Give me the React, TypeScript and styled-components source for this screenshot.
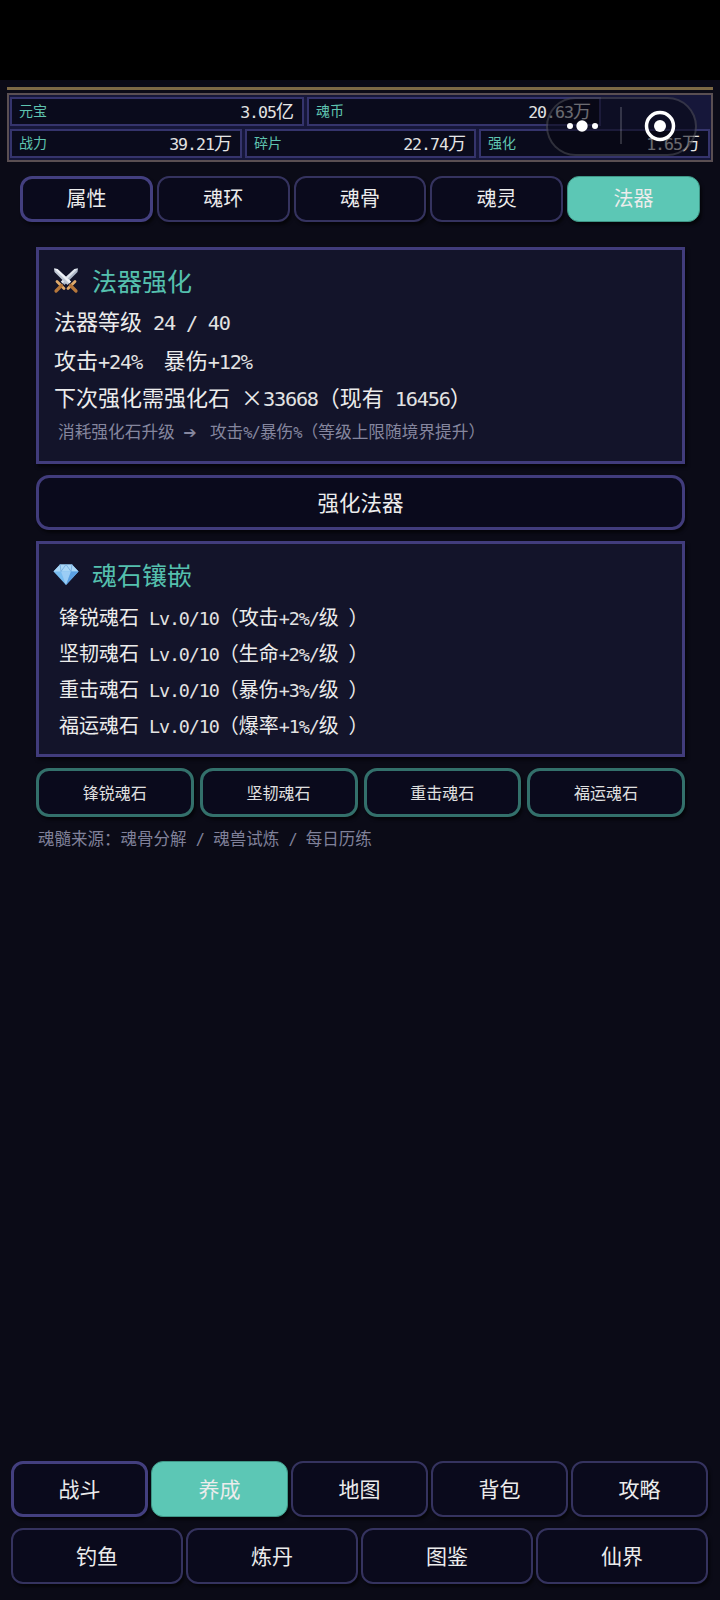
import styled, { createGlobalStyle } from "styled-components";

const GlobalStyle = createGlobalStyle`
  html, body {
    margin: 0;
    padding: 0;
    background: #000;
  }
  * {
    box-sizing: border-box;
  }
`;

const Page = styled.div`
  position: relative;
  width: 720px;
  height: 1600px;
  display: flex;
  flex-direction: column;
  background: #0b0b17;
  color: #ececec;
  font-family: "Noto Sans CJK SC", "Noto Sans", sans-serif;
  overflow: hidden;
`;

// half-width latin, the reference's font has digits at exactly 0.5em
const Num = styled.span`
  font-family: "DejaVu Sans Mono", monospace;
  font-size: 0.92em;
  letter-spacing: -0.06em;
  color: #e2e2e2;
`;

const StatusBar = styled.div`
  height: 80px;
  flex: none;
  background: #000;
`;

const HeaderWrap = styled.div`
  flex: none;
  padding: 7px 7px 0;
`;

const GoldLine = styled.div`
  height: 3px;
  background: #7d6a45;
  margin-bottom: 3px;
`;

const StatsBox = styled.div`
  height: 69px;
  border: 2px solid #5a4f52;
  background: #16173a;
  padding: 2px 1px;
  display: flex;
  flex-direction: column;
  gap: 3px;
`;

const StatRow = styled.div`
  display: flex;
  gap: 3px;
`;

const StatCell = styled.div<{ $w: number }>`
  width: ${(p) => p.$w}px;
  height: 29px;
  flex: none;
  display: flex;
  align-items: center;
  justify-content: space-between;
  padding: 0 8px 4px 7px;
  background: #0a0b1c;
  border: 2px solid #35346c;
`;

const StatLabel = styled.span`
  font-size: 14px;
  color: #5fc4b0;
`;

const StatValue = styled.span`
  font-size: 18px;
  color: #e6e6e6;
`;

const Capsule = styled.div`
  position: absolute;
  left: 546px;
  top: 97px;
  width: 151px;
  height: 59px;
  border-radius: 30px;
  border: 2px solid rgba(255, 255, 255, 0.16);
  background: rgba(8, 8, 18, 0.55);
`;

const CapsuleIcon = styled.svg`
  position: absolute;
  left: 0;
  top: 0;
`;

const TabRow = styled.div`
  flex: none;
  margin-top: 14px;
  padding: 0 20px;
  display: grid;
  grid-template-columns: repeat(5, 1fr);
  gap: 4px;
`;

const NavButton = styled.div<{ $active?: boolean; $strong?: boolean; $h: number; $fs: number }>`
  height: ${(p) => p.$h}px;
  display: flex;
  align-items: center;
  justify-content: center;
  padding-bottom: 3px;
  border-radius: 12px;
  font-size: ${(p) => p.$fs}px;
  color: #ececec;
  background: ${(p) => (p.$active ? "#5cc7b5" : "#0a0a1c")};
  border: ${(p) =>
    p.$active
      ? "1px solid #3f9686"
      : p.$strong
        ? "3px solid #433f7f"
        : "2px solid #35335f"};
  box-shadow: 2px 3px 3px rgba(0, 0, 0, 0.55);
`;

const Content = styled.div`
  flex: none;
  margin-top: 25px;
  padding: 0 35px 0 36px;
  display: flex;
  flex-direction: column;
`;

const Panel = styled.div<{ $h: number }>`
  height: ${(p) => p.$h}px;
  padding: 10px 15px 0;
  background: #13142a;
  border: 3px solid #413c7c;
  box-shadow: 2px 3px 3px rgba(0, 0, 0, 0.55);
`;

const PanelTitle = styled.div`
  height: 40px;
  display: flex;
  align-items: center;
  gap: 12px;
  font-size: 25px;
  color: #55c0ae;

  svg {
    margin-left: -2px;
  }
`;

const InfoLine = styled.div<{ $top: number }>`
  margin-top: ${(p) => p.$top}px;
  height: 30px;
  line-height: 30px;
  font-size: 22px;
  white-space: pre;
  color: #ececec;
`;

const Hint = styled.div`
  margin-top: 7px;
  padding-left: 4px;
  font-size: 16.7px;
  line-height: 26px;
  color: #85869e;
  white-space: pre;

  ${Num} {
    color: inherit;
  }
`;

const HintArrow = styled.span`
  font-family: "DejaVu Sans", sans-serif;
  font-size: 16px;
  margin-right: 5px;
`;

const GemLine = styled.div`
  height: 36px;
  line-height: 36px;
  padding-left: 5px;
  font-size: 20px;
  white-space: pre;
  color: #ececec;
`;

const GemList = styled.div`
  margin-top: 5px;
`;

const WideButton = styled.div`
  margin: 11px 0;
  height: 55px;
  display: flex;
  align-items: center;
  justify-content: center;
  padding-bottom: 3px;
  border-radius: 13px;
  border: 3px solid #413c7c;
  background: #0a0a1c;
  font-size: 21.5px;
  color: #ececec;
  box-shadow: 2px 3px 3px rgba(0, 0, 0, 0.55);
`;

const GemButtons = styled.div`
  margin-top: 11px;
  display: grid;
  grid-template-columns: repeat(4, 1fr);
  gap: 6px;
`;

const GemButton = styled.div`
  height: 49px;
  display: flex;
  align-items: center;
  justify-content: center;
  padding-bottom: 2px;
  border-radius: 13px;
  border: 3px solid #33706b;
  background: #0a0a1c;
  font-size: 16px;
  color: #e0e0e0;
  box-shadow: 2px 3px 3px rgba(0, 0, 0, 0.55);
`;

const Note = styled.div`
  margin-top: 9px;
  padding-left: 2px;
  font-size: 16.5px;
  line-height: 24px;
  word-spacing: 1px;
  color: #80819a;
  white-space: pre;

  ${Num} {
    color: inherit;
  }
`;

const Spacer = styled.div`
  flex: 1;
`;

const BottomNav = styled.div`
  flex: none;
  padding: 0 12px 16px 11px;
  display: flex;
  flex-direction: column;
  gap: 11px;
`;

const NavRow = styled.div<{ $cols: number }>`
  display: grid;
  grid-template-columns: repeat(${(p) => p.$cols}, 1fr);
  gap: 3px;
`;

const SwordsIcon = () => (
  <svg width="28" height="28" viewBox="0 0 28 28">
    <path d="M26 2.500l-.5 3.500-13 13-3.500-3.500L22.500 3z" fill="#aeb8c8" />
    <path d="M26 2.500L10.500 17.500l-1.500-2L22.500 3z" fill="#dfe4ec" />
    <path d="M2 2.500l.5 3.500 13 13 3.500-3.500L5.500 3z" fill="#c0c9d6" />
    <path d="M2 2.500l15.500 15 1.500-2L5.500 3z" fill="#eef1f6" />
    <path d="M5 15.500l7 7M23 15.500l-7 7" stroke="#e0ab6c" strokeWidth="2.800" strokeLinecap="round" />
    <path d="M9.500 19.500L4 25M18.500 19.500L24 25" stroke="#b5763a" strokeWidth="3.200" strokeLinecap="round" />
  </svg>
);

const GemIcon = () => (
  <svg width="28" height="28" viewBox="0 0 28 28">
    <path d="M8 4.500h12l6.500 7L14 25 1.500 11.500z" fill="#78bcf0" />
    <path d="M8 4.500h12l6.500 7h-25z" fill="#a9d6f6" />
    <path d="M9 11.500h10L14 25z" fill="#9bcdf5" />
    <path d="M8 4.500l1 7 5-7 5 7 1-7" fill="none" stroke="#6ea8dc" strokeWidth="0.800" />
    <path d="M19 11.500h7.500L14 25z" fill="#5a9fe2" />
  </svg>
);

const tabs = ["属性", "魂环", "魂骨", "魂灵", "法器"];
const gems = [
  { name: "锋锐魂石", effect: "攻击", bonus: "+2%/" },
  { name: "坚韧魂石", effect: "生命", bonus: "+2%/" },
  { name: "重击魂石", effect: "暴伤", bonus: "+3%/" },
  { name: "福运魂石", effect: "爆率", bonus: "+1%/" },
];
const navTop = ["战斗", "养成", "地图", "背包", "攻略"];
const navBottom = ["钓鱼", "炼丹", "图鉴", "仙界"];

export default function App() {
  return (
    <Page>
      <GlobalStyle />
      <StatusBar />
      <HeaderWrap>
        <GoldLine />
        <StatsBox>
          <StatRow>
            <StatCell $w={294}>
              <StatLabel>元宝</StatLabel>
              <StatValue><Num>3.05</Num>亿</StatValue>
            </StatCell>
            <StatCell $w={294}>
              <StatLabel>魂币</StatLabel>
              <StatValue><Num>20.63</Num>万</StatValue>
            </StatCell>
          </StatRow>
          <StatRow>
            <StatCell $w={232}>
              <StatLabel>战力</StatLabel>
              <StatValue><Num>39.21</Num>万</StatValue>
            </StatCell>
            <StatCell $w={231}>
              <StatLabel>碎片</StatLabel>
              <StatValue><Num>22.74</Num>万</StatValue>
            </StatCell>
            <StatCell $w={231}>
              <StatLabel>强化</StatLabel>
              <StatValue><Num>1.65</Num>万</StatValue>
            </StatCell>
          </StatRow>
        </StatsBox>
      </HeaderWrap>
      <Capsule>
        <CapsuleIcon width="147" height="55" viewBox="0 0 147 55">
          <circle cx="22" cy="27" r="3" fill="#fff" />
          <circle cx="34" cy="27" r="5.700" fill="#fff" />
          <circle cx="47" cy="27" r="3" fill="#fff" />
          <path d="M73 8v37" stroke="rgba(255,255,255,0.22)" strokeWidth="1.500" />
          <circle cx="112" cy="27" r="13.500" fill="none" stroke="#fff" strokeWidth="3.500" />
          <circle cx="112" cy="27" r="6" fill="#fff" />
        </CapsuleIcon>
      </Capsule>
      <TabRow>
        {tabs.map((t, i) => (
          <NavButton key={t} $h={46} $fs={20} $active={i === 4} $strong={i === 0}>
            {t}
          </NavButton>
        ))}
      </TabRow>
      <Content>
        <Panel $h={217}>
          <PanelTitle>
            <SwordsIcon />
            法器强化
          </PanelTitle>
          <InfoLine $top={5}>法器等级<Num> 24 / 40</Num></InfoLine>
          <InfoLine $top={9}>攻击<Num>+24%  </Num>暴伤<Num>+12%</Num></InfoLine>
          <InfoLine $top={7}>下次强化需强化石<Num> </Num>×<Num>33668</Num>（现有<Num> 16456</Num>）</InfoLine>
          <Hint>消耗强化石升级<Num> </Num><HintArrow>➔</HintArrow><Num> </Num>攻击<Num>%/</Num>暴伤<Num>%</Num>（等级上限随境界提升）</Hint>
        </Panel>
        <WideButton>强化法器</WideButton>
        <Panel $h={216}>
          <PanelTitle>
            <GemIcon />
            魂石镶嵌
          </PanelTitle>
          <GemList>
            {gems.map((g) => (
              <GemLine key={g.name}>
                {g.name}<Num> Lv.0/10</Num>（{g.effect}<Num>{g.bonus}</Num>级<Num> </Num>）
              </GemLine>
            ))}
          </GemList>
        </Panel>
        <GemButtons>
          {gems.map((g) => (
            <GemButton key={g.name}>{g.name}</GemButton>
          ))}
        </GemButtons>
        <Note>魂髓来源：魂骨分解<Num> / </Num>魂兽试炼<Num> / </Num>每日历练</Note>
      </Content>
      <Spacer />
      <BottomNav>
        <NavRow $cols={5}>
          {navTop.map((t, i) => (
            <NavButton key={t} $h={56} $fs={21} $active={i === 1} $strong={i === 0}>
              {t}
            </NavButton>
          ))}
        </NavRow>
        <NavRow $cols={4}>
          {navBottom.map((t) => (
            <NavButton key={t} $h={56} $fs={21}>
              {t}
            </NavButton>
          ))}
        </NavRow>
      </BottomNav>
    </Page>
  );
}
